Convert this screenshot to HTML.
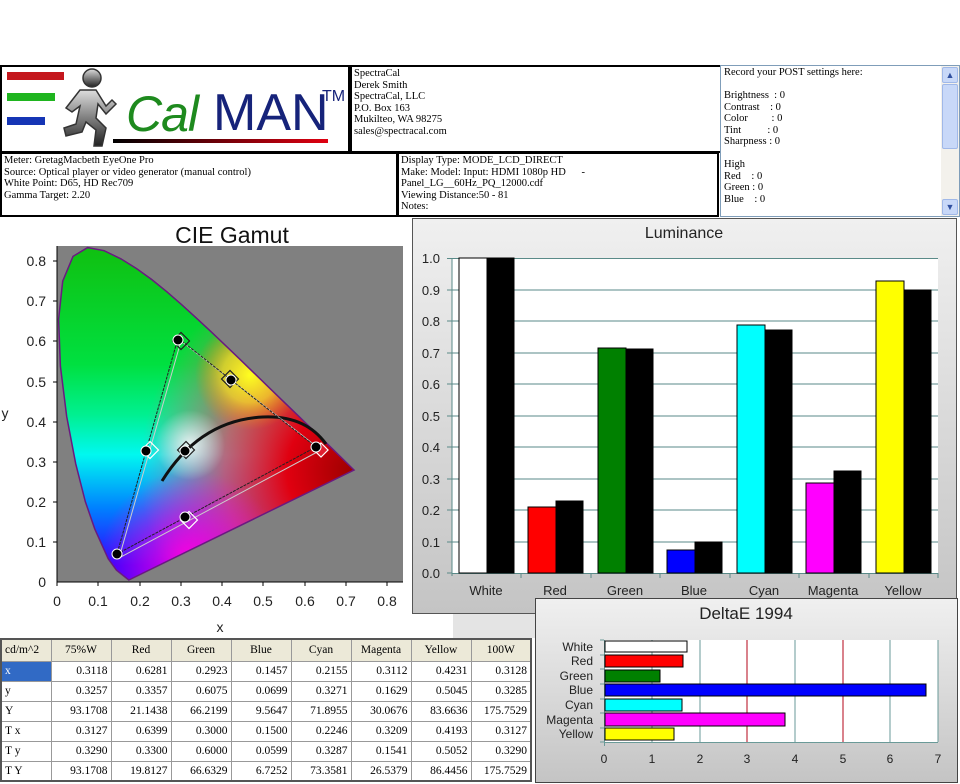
<!DOCTYPE html>
<html><head><meta charset="utf-8"><style>
*{margin:0;padding:0;box-sizing:border-box}
body{width:960px;height:784px;background:#fff;position:relative;overflow:hidden;font-family:"Liberation Serif",serif;}
.a{position:absolute}
.box{position:absolute;border:2px solid #000;background:#fff}
.s{font-family:"Liberation Serif",serif;font-size:10.5px;line-height:11.5px;color:#000}
.sans{font-family:"Liberation Sans",sans-serif}
table{border-collapse:collapse;font-family:"Liberation Serif",serif;font-size:11.5px}
td{border:1px solid #999;height:20px;width:60px;text-align:right;padding-right:3px}
td:first-child{width:50px;text-align:left;padding-left:3px}
tr.h td{background:#ece9d8;text-align:center;height:22px;padding:0}
tr.h td:first-child{text-align:left;padding-left:3px}
</style></head><body>

<!-- Logo box -->
<div class="box" style="left:0;top:65px;width:350px;height:88px;"></div>
<div class="a" style="left:7px;top:72px;width:57px;height:8px;background:#c4171d"></div>
<div class="a" style="left:7px;top:93px;width:48px;height:8px;background:#1fb51f"></div>
<div class="a" style="left:7px;top:117px;width:38px;height:8px;background:#1535b5"></div>
<svg class="a" style="left:50px;top:66px" width="70" height="84" viewBox="0 0 70 84">
<defs><linearGradient id="rg" x1="0" y1="0" x2="0" y2="1"><stop offset="0" stop-color="#ddd"/><stop offset="1" stop-color="#222"/></linearGradient></defs>
<circle cx="42" cy="12" r="9" fill="url(#rg)" stroke="#333" stroke-width="1.5"/>
<path d="M30 24 L46 24 L56 40 L62 34 L66 38 L56 48 L48 38 L46 52 L56 62 L52 80 L44 80 L46 64 L36 56 L32 66 L16 70 L14 62 L26 58 L30 40 L22 46 L16 42 Z" fill="url(#rg)" stroke="#333" stroke-width="1.5"/>
</svg>
<div class="a sans" style="left:126px;top:88px;font-style:italic;font-size:50px;color:#1e8a1e;line-height:52px;letter-spacing:-1px">Cal</div>
<div class="a sans" style="left:213px;top:86px;font-size:52px;color:#16237a;line-height:54px">MAN</div>
<div class="a sans" style="left:322px;top:88px;font-size:16px;color:#16237a">TM</div>
<div class="a" style="left:113px;top:139px;width:215px;height:4px;background:linear-gradient(90deg,#000,#e00010)"></div>

<!-- Address -->
<div class="box s" style="left:350px;top:65px;width:372px;height:88px;padding:1px 2px;">SpectraCal<br>Derek Smith<br>SpectraCal, LLC<br>P.O. Box 163<br>Mukilteo, WA 98275<br>sales@spectracal.com</div>

<!-- Meter -->
<div class="box s" style="left:0;top:152px;width:398px;height:65px;padding:1px 2px;">Meter: GretagMacbeth EyeOne Pro<br>Source: Optical player or video generator (manual control)<br>White Point: D65, HD Rec709<br>Gamma Target: 2.20</div>
<div class="box s" style="left:397px;top:152px;width:322px;height:65px;padding:1px 2px;">Display Type: MODE_LCD_DIRECT<br>Make: Model: Input: HDMI 1080p HD &nbsp;&nbsp;&nbsp;&nbsp; -<br>Panel_LG__60Hz_PQ_12000.cdf<br>Viewing Distance:50 - 81<br>Notes:</div>

<!-- POST -->
<div class="a s" style="left:720px;top:65px;width:240px;height:152px;border:1px solid #7f9db9;background:#fff;padding:1px 3px;">Record your POST settings here:<br><br>Brightness &nbsp;: 0<br>Contrast &nbsp;&nbsp;&nbsp;: 0<br>Color &nbsp;&nbsp;&nbsp;&nbsp;&nbsp;&nbsp;&nbsp;&nbsp;: 0<br>Tint &nbsp;&nbsp;&nbsp;&nbsp;&nbsp;&nbsp;&nbsp;&nbsp;&nbsp;: 0<br>Sharpness : 0<br><br>High<br>Red &nbsp;&nbsp;&nbsp;: 0<br>Green : 0<br>Blue &nbsp;&nbsp;&nbsp;: 0</div>
<div class="a" style="left:941px;top:66px;width:18px;height:150px;background:#f3f1ec"></div>
<div class="a" style="left:942px;top:67px;width:16px;height:16px;background:#c8d8f8;border:1px solid #a0b8e8;border-radius:2px;font-size:9px;text-align:center;color:#3050a0;line-height:14px">▲</div>
<div class="a" style="left:942px;top:84px;width:16px;height:65px;background:#c8d8f8;border:1px solid #a0b8e8;border-radius:2px"></div>
<div class="a" style="left:942px;top:199px;width:16px;height:16px;background:#c8d8f8;border:1px solid #a0b8e8;border-radius:2px;font-size:9px;text-align:center;color:#3050a0;line-height:14px">▼</div>

<!-- CIE -->
<svg class="a" style="left:0;top:218px" width="412" height="420" viewBox="0 218 412 420" font-family="Liberation Sans, sans-serif">
<defs>
<clipPath id="loc"><path id="lp" d="M128.8,580 L116.4,570.1 108.2,558.8 94.7,528.8 85.3,501.5 75.7,463.7 66.7,416.5 60.4,366.1 58.6,319.4 62.7,281.2 73,256.4 87.6,247.6 104.1,250.7 120.8,258.8 136.6,268.6 151.7,279.5 166.6,291.6 181.4,304.4 196.1,317.8 210.9,331.6 225.6,345.6 240.2,359.6 254.5,373.4 268.4,386.9 281.7,399.8 294.3,411.9 305.7,423 315.6,432.6 324.4,441.1 331.6,448.1 354,470 Z"/></clipPath>
<linearGradient id="gv" x1="0" y1="247" x2="0" y2="582" gradientUnits="userSpaceOnUse">
<stop offset="0" stop-color="#10c010"/><stop offset="0.35" stop-color="#00e040"/><stop offset="0.5" stop-color="#00f090"/><stop offset="0.62" stop-color="#00f8f0"/><stop offset="0.78" stop-color="#0080ff"/><stop offset="0.95" stop-color="#3000ff"/></linearGradient>
<radialGradient id="rr" cx="350" cy="470" r="210" gradientUnits="userSpaceOnUse"><stop offset="0" stop-color="#a00000"/><stop offset="0.3" stop-color="#e00010"/><stop offset="0.6" stop-color="#ff3050" stop-opacity="0.7"/><stop offset="1" stop-color="#ff6080" stop-opacity="0"/></radialGradient>
<radialGradient id="rm" cx="190" cy="560" r="90" gradientUnits="userSpaceOnUse"><stop offset="0" stop-color="#ff00e0"/><stop offset="1" stop-color="#ff00e0" stop-opacity="0"/></radialGradient>
<radialGradient id="ry" cx="250" cy="375" r="55" gradientUnits="userSpaceOnUse"><stop offset="0" stop-color="#ffff20"/><stop offset="0.5" stop-color="#ffe020" stop-opacity="0.7"/><stop offset="1" stop-color="#ff8000" stop-opacity="0"/></radialGradient>
<radialGradient id="rw" cx="190" cy="445" r="35" gradientUnits="userSpaceOnUse"><stop offset="0" stop-color="#fff" stop-opacity="0.85"/><stop offset="1" stop-color="#fff" stop-opacity="0"/></radialGradient>
</defs>
<text x="232" y="243" font-size="23" text-anchor="middle" fill="#111">CIE Gamut</text>
<rect x="57" y="246" width="346" height="336" fill="#808080"/>
<g clip-path="url(#loc)">
<rect x="50" y="240" width="320" height="350" fill="url(#gv)"/>
<rect x="50" y="240" width="320" height="350" fill="url(#rr)"/>
<rect x="50" y="240" width="320" height="350" fill="url(#rm)"/>
<rect x="50" y="240" width="320" height="350" fill="url(#ry)"/>
<rect x="50" y="240" width="320" height="350" fill="url(#rw)"/>
</g>
<use href="#lp" fill="none" stroke="#6a1a80" stroke-width="1.5"/>
<g stroke="#000" stroke-width="1">
<line x1="57" y1="246" x2="57" y2="582"/><line x1="57" y1="582" x2="403" y2="582"/>
</g>
<g font-size="14" fill="#222" text-anchor="end">
<text x="46" y="587">0</text><text x="46" y="547">0.1</text><text x="46" y="507">0.2</text><text x="46" y="467">0.3</text><text x="46" y="427">0.4</text><text x="46" y="387">0.5</text><text x="46" y="346">0.6</text><text x="46" y="306">0.7</text><text x="46" y="266">0.8</text>
</g>
<g font-size="14" fill="#222" text-anchor="middle">
<text x="57" y="606">0</text><text x="98" y="606">0.1</text><text x="140" y="606">0.2</text><text x="181" y="606">0.3</text><text x="222" y="606">0.4</text><text x="263" y="606">0.5</text><text x="305" y="606">0.6</text><text x="346" y="606">0.7</text><text x="387" y="606">0.8</text>
<text x="220" y="632">x</text><text x="5" y="418">y</text>
</g>
<g stroke="#000" stroke-width="1"><path d="M57 582v4M98 582v4M140 582v4M181 582v4M222 582v4M263 582v4M305 582v4M346 582v4M387 582v4M53 542h4M53 502h4M53 462h4M53 422h4M53 382h4M53 341h4M53 301h4M53 261h4"/></g>
<path d="M162 481 Q200 420 263 417 Q305 415 326 444" fill="none" stroke="#111" stroke-width="3"/>
<g fill="none" stroke-width="1">
<path d="M321 450 L181 341 L119 558 Z" stroke="#ccc"/>
<path d="M316 447 L178 338 L117 554 Z" stroke="#222" stroke-dasharray="3 1"/>
</g>
<g fill="none" stroke="#fff" stroke-width="1.2">
<rect x="-6" y="-6" width="12" height="12" transform="translate(181 341) rotate(45)" stroke="#222"/>
<rect x="-6" y="-6" width="12" height="12" transform="translate(150 450) rotate(45)"/>
<rect x="-6" y="-6" width="12" height="12" transform="translate(186 450) rotate(45)" stroke="#222"/>
<rect x="-6" y="-6" width="12" height="12" transform="translate(189 520) rotate(45)"/>
<rect x="-6" y="-6" width="12" height="12" transform="translate(230 379) rotate(45)" stroke="#222"/>
<rect x="-5" y="-5" width="10" height="10" transform="translate(321 450) rotate(45)" fill="#e02030"/>
</g>
<g fill="#000" stroke="#fff" stroke-width="1">
<circle cx="316" cy="447" r="5"/><circle cx="178" cy="340" r="5"/><circle cx="117" cy="554" r="5"/><circle cx="146" cy="451" r="5"/><circle cx="185" cy="517" r="5"/><circle cx="231" cy="380" r="5"/><circle cx="185" cy="451" r="5"/>
</g>
</svg>

<!-- Luminance -->
<svg class="a" style="left:412px;top:218px" width="546" height="396" viewBox="412 218 546 396" font-family="Liberation Sans, sans-serif">
<defs><linearGradient id="pg" x1="0" y1="0" x2="0" y2="1"><stop offset="0" stop-color="#f0f0f0"/><stop offset="1" stop-color="#c4c4c4"/></linearGradient></defs>
<rect x="412.5" y="218.5" width="544" height="395" fill="url(#pg)" stroke="#555"/>
<text x="684" y="238" font-size="16" text-anchor="middle" fill="#222">Luminance</text>
<rect x="452" y="258" width="486" height="315" fill="#fff"/>
<g stroke="#5a8a88" stroke-width="1">
<path d="M452 258.5h486M452 290h486M452 321h486M452 353h486M452 384h486M452 416h486M452 447h486M452 479h486M452 510h486M452 542h486"/>
<path d="M452 258v318M452 573.5h486M447 258.5h5M447 290h5M447 321h5M447 353h5M447 384h5M447 416h5M447 447h5M447 479h5M447 510h5M447 542h5M447 573h5M521 573v5M591 573v5M660 573v5M730 573v5M799 573v5M869 573v5M938 573v5"/>
</g>
<g stroke="#000" stroke-width="1">
<rect x="459" y="258" width="28" height="315" fill="#fff"/><rect x="487" y="258" width="27" height="315" fill="#000"/>
<rect x="528" y="507" width="28" height="66" fill="#f00"/><rect x="556" y="501" width="27" height="72" fill="#000"/>
<rect x="598" y="348" width="28" height="225" fill="#008000"/><rect x="626" y="349" width="27" height="224" fill="#000"/>
<rect x="667" y="550" width="28" height="23" fill="#00f"/><rect x="695" y="542" width="27" height="31" fill="#000"/>
<rect x="737" y="325" width="28" height="248" fill="#0ff"/><rect x="765" y="330" width="27" height="243" fill="#000"/>
<rect x="806" y="483" width="28" height="90" fill="#f0f"/><rect x="834" y="471" width="27" height="102" fill="#000"/>
<rect x="876" y="281" width="28" height="292" fill="#ff0"/><rect x="904" y="290" width="27" height="283" fill="#000"/>
</g>
<g font-size="13" fill="#222" text-anchor="end">
<text x="440" y="263">1.0</text><text x="440" y="295">0.9</text><text x="440" y="326">0.8</text><text x="440" y="358">0.7</text><text x="440" y="389">0.6</text><text x="440" y="421">0.5</text><text x="440" y="452">0.4</text><text x="440" y="484">0.3</text><text x="440" y="515">0.2</text><text x="440" y="547">0.1</text><text x="440" y="578">0.0</text>
</g>
<g font-size="13" fill="#222" text-anchor="middle">
<text x="486" y="595">White</text><text x="555" y="595">Red</text><text x="625" y="595">Green</text><text x="694" y="595">Blue</text><text x="764" y="595">Cyan</text><text x="833" y="595">Magenta</text><text x="903" y="595">Yellow</text>
</g>
</svg>

<div class="a" style="left:453px;top:614px;width:82px;height:24px;background:#e4e4e4"></div>

<!-- Table -->
<table class="a" style="left:0;top:638px;border:2px solid #555;">
<tr class="h"><td>cd/m^2</td><td>75%W</td><td>Red</td><td>Green</td><td>Blue</td><td>Cyan</td><td>Magenta</td><td>Yellow</td><td>100W</td></tr>
<tr><td style="background:#316ac5;color:#fff">x</td><td>0.3118</td><td>0.6281</td><td>0.2923</td><td>0.1457</td><td>0.2155</td><td>0.3112</td><td>0.4231</td><td>0.3128</td></tr>
<tr><td>y</td><td>0.3257</td><td>0.3357</td><td>0.6075</td><td>0.0699</td><td>0.3271</td><td>0.1629</td><td>0.5045</td><td>0.3285</td></tr>
<tr><td>Y</td><td>93.1708</td><td>21.1438</td><td>66.2199</td><td>9.5647</td><td>71.8955</td><td>30.0676</td><td>83.6636</td><td>175.7529</td></tr>
<tr><td>T x</td><td>0.3127</td><td>0.6399</td><td>0.3000</td><td>0.1500</td><td>0.2246</td><td>0.3209</td><td>0.4193</td><td>0.3127</td></tr>
<tr><td>T y</td><td>0.3290</td><td>0.3300</td><td>0.6000</td><td>0.0599</td><td>0.3287</td><td>0.1541</td><td>0.5052</td><td>0.3290</td></tr>
<tr><td>T Y</td><td>93.1708</td><td>19.8127</td><td>66.6329</td><td>6.7252</td><td>73.3581</td><td>26.5379</td><td>86.4456</td><td>175.7529</td></tr>
</table>

<!-- DeltaE -->
<svg class="a" style="left:535px;top:598px" width="425" height="186" viewBox="535 598 425 186" font-family="Liberation Sans, sans-serif">
<rect x="535.5" y="598.5" width="422" height="184" fill="url(#pg)" stroke="#444"/>
<text x="746" y="619" font-size="17" text-anchor="middle" fill="#222">DeltaE 1994</text>
<rect x="604" y="640" width="334" height="102" fill="#fff"/>
<g stroke="#6a9a98" stroke-width="1"><path d="M652 640v102M700 640v102M795 640v102M890 640v102M938 640v102M604.5 640v106M604 742.5h334M600 640h4M600 655h4M600 669h4M600 684h4M600 699h4M600 713h4M600 728h4M600 742h4"/></g>
<g stroke="#c03040" stroke-width="1.2"><path d="M747 640v102M843 640v102"/></g>
<g stroke="#000" stroke-width="1">
<rect x="605" y="641" width="82" height="11" fill="#fff"/>
<rect x="605" y="655" width="78" height="12" fill="#f00"/>
<rect x="605" y="670" width="55" height="12" fill="#008000"/>
<rect x="605" y="684" width="321" height="12" fill="#00f"/>
<rect x="605" y="699" width="77" height="12" fill="#0ff"/>
<rect x="605" y="713" width="180" height="13" fill="#f0f"/>
<rect x="605" y="728" width="69" height="12" fill="#ff0"/>
</g>
<g font-size="12" fill="#222" text-anchor="end">
<text x="593" y="651">White</text><text x="593" y="665">Red</text><text x="593" y="680">Green</text><text x="593" y="694">Blue</text><text x="593" y="709">Cyan</text><text x="593" y="724">Magenta</text><text x="593" y="738">Yellow</text>
</g>
<g font-size="12" fill="#222" text-anchor="middle">
<text x="604" y="763">0</text><text x="652" y="763">1</text><text x="700" y="763">2</text><text x="747" y="763">3</text><text x="795" y="763">4</text><text x="843" y="763">5</text><text x="890" y="763">6</text><text x="938" y="763">7</text>
</g>
</svg>
</body></html>
